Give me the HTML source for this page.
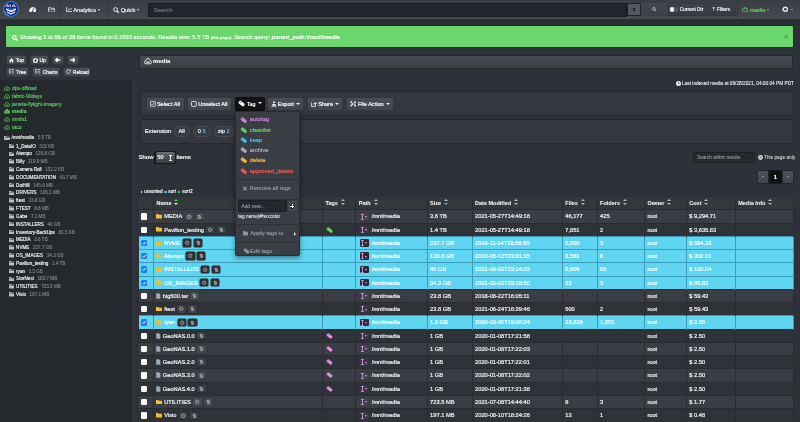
<!DOCTYPE html>
<html><head><meta charset="utf-8">
<style>
*{box-sizing:border-box;margin:0;padding:0}
html,body{width:800px;height:422px;overflow:hidden;background:#2e313a;font-family:"Liberation Sans",sans-serif;color:#fff}
#root{position:absolute;left:0;top:0;width:800px;height:422px;will-change:transform;-webkit-text-stroke-width:0.22px}
.abs{position:absolute}
svg{display:block}
#nav{left:0;top:0;width:800px;height:19px;background:linear-gradient(#3a3d42,#45484d);border-bottom:0.8px solid #4a4d52}
.sep{position:absolute;top:0;width:0.6px;height:18.5px;background:#37393e}
.nt{position:absolute;font-size:5.7px;color:#e8e8e8;white-space:nowrap;line-height:8px;top:6px}
.caret{display:inline-block;width:0;height:0;border-left:1.8px solid transparent;border-right:1.8px solid transparent;border-top:2.1px solid currentColor;vertical-align:middle;margin-left:2px;position:relative;top:-0.5px}
#search{left:147.5px;top:2.5px;width:479.5px;height:14px;background:#222529;border:0.6px solid #1b1d20}
#search span{position:absolute;left:5px;top:3.6px;font-size:6px;color:#6e7176}
.nbtn{position:absolute;top:2.5px;height:13px;background:linear-gradient(#45484e,#3f4248);border-radius:1px}
#alert{left:5.2px;top:25px;width:788.6px;height:23px;background:#6bd66b;border:0.8px solid #2a2632;border-radius:2px}
#alert .t{position:absolute;left:13.5px;top:7.6px;font-size:5.75px;-webkit-text-stroke-width:0.12px;white-space:nowrap;line-height:7px;color:#fff}
.btn{position:absolute;background:linear-gradient(#4a4d53,#42454b);border:0.5px solid #34373c;border-radius:2px;font-size:5.6px;color:#f4f4f4;white-space:nowrap;line-height:8px}
.btn .in{position:absolute;left:0;right:0;top:50%;transform:translateY(-50%);display:flex;align-items:center;justify-content:center;gap:1px}
#tree{left:0;top:80px;width:132px;height:342px;background:#25282c}
.disk{position:absolute;left:3.5px;font-size:5.0px;color:#5fd35f;-webkit-text-stroke-width:0.12px;white-space:nowrap;line-height:7px;display:flex;align-items:center;gap:2.5px}
.ti{position:absolute;-webkit-text-stroke-width:0.15px;font-size:4.6px;color:#f2f2f2;white-space:nowrap;line-height:7px;display:flex;align-items:center}
.ti b{font-weight:normal;margin-left:1.8px}
.ti i{font-style:normal;color:#7f8287;margin-left:3.6px}
.panel{position:absolute;background:#34373e;border:0.8px solid #26292e;border-radius:2px}
table{position:absolute;left:139px;top:197px;border-collapse:collapse;table-layout:fixed;width:654.5px}
td,th{height:13.25px;padding:0 0 0 2.5px;font-size:5.7px;white-space:nowrap;overflow:hidden;text-align:left;border-right:0.8px solid #2a2c30;border-top:1px solid #292b2f;color:#ededed;vertical-align:middle}
th{height:12.8px;background:#34373c;font-weight:bold;font-size:5.5px;border-top:none;color:#f4f4f4;-webkit-text-stroke-width:0.05px}
tr.o td{background:#3a3d43}
tr.e td{background:#2f3237}
tr.s td{background:#5fd5f2;border-color:#3a9cb8;color:#f6fcfe}
.cell{display:flex;align-items:center;height:100%}
.cb{width:6.2px;height:6.2px;background:#fdfdfd;border-radius:1.2px;margin-left:-0.5px}
.cb.on{background:#1f7ef2;position:relative}
.sb{display:block;flex:none;width:8.4px;height:7.6px;background:rgba(255,255,255,.07);box-shadow:0 0 0 0.5px rgba(0,0,0,.18);border-radius:1px;margin-left:2.4px;position:relative}
tr.s .sb{background:#332f31;box-shadow:0 0 0 0.5px #222}
.sbx::after{content:"";position:absolute;left:2.5px;top:2.2px;width:3.6px;height:3.6px;border:0.8px solid #9c9fa4;border-radius:50%;box-sizing:border-box}
.sbx.t::after{border-radius:0.5px;border:none;background:linear-gradient(120deg,transparent 38%,#9c9fa4 38%,#9c9fa4 62%,transparent 62%);width:3.6px;height:4.2px;left:2.4px;top:1.8px}
.fic{margin-right:2.2px;flex:none}
.pb{width:9.5px;height:7.4px;background:rgba(120,100,130,.12);border-radius:1.2px;margin-left:1px;margin-right:2.5px;position:relative;flex:none}
tr.s .pb{background:#2d2a31}
.pb::before{content:"";position:absolute;left:1.2px;top:1px;width:2.8px;height:5.6px;background:linear-gradient(#d3a0e6,#d3a0e6) 0 0/2.8px 0.8px no-repeat,linear-gradient(#d3a0e6,#d3a0e6) 0 4.8px/2.8px 0.8px no-repeat,linear-gradient(#c98ae0,#c98ae0) 0.7px 0/1.4px 5.6px no-repeat}
.pb::after{content:"";position:absolute;left:4.9px;top:3.1px;border-left:1.8px solid transparent;border-right:1.8px solid transparent;border-top:2.1px solid #ec8cf0}
.srt{display:inline-block;width:4.2px;height:7px;margin-left:2.8px;vertical-align:middle;position:relative;top:-0.4px}
.srt::before{content:"";position:absolute;left:0;top:0;border-left:2.1px solid transparent;border-right:2.1px solid transparent;border-bottom:2.7px solid #b5b8bc}
.srt::after{content:"";position:absolute;left:0;top:3.9px;border-left:2.1px solid transparent;border-right:2.1px solid transparent;border-top:2.7px solid #b5b8bc}
.srt.g::before{border-bottom-color:#2fe02f}.srt.g::after{border-top-color:#e6dfe6}
.srt.c::after{border-top-color:#45b8e6}
#dd{left:235.2px;top:111px;width:64.5px;height:145.4px;background:#3a3d43;border:0.6px solid #2a2c30;border-radius:0 0 2px 2px;box-shadow:0 2px 5px rgba(0,0,0,.45)}
.di{position:absolute;left:4.2px;font-size:5.8px;white-space:nowrap;line-height:7px;display:flex;align-items:center;gap:1.8px}
.dv{position:absolute;left:0;width:100%;height:0.6px;background:#2e3035}
</style></head><body><div id="root">

<div class="abs" style="left:0;top:18.5px;width:800px;height:7.5px;background:#2b2e34"></div>
<div id="nav" class="abs"></div>
<div class="sep" style="left:59.5px"></div>
<div class="sep" style="left:106.7px"></div>
<div class="sep" style="left:736.8px"></div>
<svg class="abs" style="left:2.8px;top:0.6px" width="16" height="16" viewBox="0 0 32 32">
<circle cx="16" cy="16" r="15.6" fill="#2a9ee2"/><circle cx="16" cy="16" r="13.8" fill="#1e2287"/>
<path d="M5.5 12 L9 6.5 L12.5 12 M7 10 H11 M14.6 6.5 V12 M18 12 L21.5 6.5 L25 12 M19.5 10 H23.5" stroke="#f0f0ff" stroke-width="1.6" fill="none"/>
<path d="M6 14.5 L16 19 L26 14.5 L26 18 L16 22.5 L6 18 Z" fill="#e6f6ff"/>
<path d="M7.5 20.5 L16 24.5 L24.5 20.5 L24 23.5 L16 27.5 L8 23.5 Z" fill="#cdefff"/>
<path d="M9 14 L16 17 L23 14" stroke="#35bdf0" stroke-width="1.2" fill="none"/>
<path d="M3 20 A13.6 13.6 0 0 0 12 29.5" stroke="#3cc3f2" stroke-width="1.6" fill="none"/>
</svg>
<svg class="abs" style="left:28.9px;top:5.7px" width="7.6" height="6.8" viewBox="0 0 15 13.5"><path d="M1.6 12.8 A7 7 0 1 1 13.4 12.8 Z" fill="#efefef"/><path d="M6.8 11 L9.6 4.2" stroke="#3d4045" stroke-width="1.5"/><circle cx="6.8" cy="11" r="1.4" fill="#3d4045"/></svg>
<svg class="abs" style="left:47.6px;top:6.6px" width="7" height="5.6" viewBox="0 0 14 11"><path d="M1 2 Q1 1 2 1 H5 L6.5 2.5 H12 Q13 2.5 13 3.5 V9 Q13 10 12 10 H2 Q1 10 1 9 Z" fill="none" stroke="#e6e6e6" stroke-width="1.6"/><path d="M1.5 4.5 H12.5" stroke="#e6e6e6" stroke-width="1.4"/></svg>
<svg class="abs" style="left:65.6px;top:7.2px" width="6.6" height="5" viewBox="0 0 13 10"><path d="M1 0 V9 H13" stroke="#e8e8e8" stroke-width="1.6" fill="none"/><path d="M3 7 L6 3.5 L8.5 5.5 L12 1.5" stroke="#e8e8e8" stroke-width="1.5" fill="none"/></svg>
<div class="nt" style="left:73.3px">Analytics<span class="caret"></span></div>
<svg class="abs" style="left:113.4px;top:6.9px" width="6.4" height="6.4" viewBox="0 0 13 13"><circle cx="5.3" cy="5.3" r="3.9" stroke="#eee" stroke-width="2" fill="none"/><path d="M8.2 8.2 L12 12" stroke="#eee" stroke-width="2.4"/></svg>
<div class="nt" style="left:120.7px">Quick<span class="caret"></span></div>
<div id="search" class="abs"><span>Search</span></div>
<div class="nbtn" style="left:626.5px;width:14px;background:#54575c;border:0.8px solid #1f2124"><div style="position:absolute;left:5.2px;top:4.8px;width:2.8px;height:2.6px;background:#1c1e21"></div></div>
<div class="nbtn" style="left:641px;width:26px;background:linear-gradient(#44474d,#3d4046)"></div>
<svg class="abs" style="left:651.5px;top:6.8px" width="4.6" height="4.6" viewBox="0 0 13 13"><circle cx="5.3" cy="5.3" r="3.9" stroke="#cfcfcf" stroke-width="2" fill="none"/><path d="M8.2 8.2 L12 12" stroke="#cfcfcf" stroke-width="2.4"/></svg>
<div class="nbtn" style="left:667.5px;width:38px;background:linear-gradient(#3f4248,#383b41);box-shadow:inset 0 0 0 0.5px #2f3237"></div><div class="abs" style="left:669.3px;top:6.6px;width:9px;height:5.8px;border-radius:3px;background:#55585d"></div>
<div class="abs" style="left:669.6px;top:7.1px;width:4.9px;height:4.9px;border-radius:50%;background:#f6f6f6"></div>
<div class="nt" style="left:679.8px;top:5.7px;font-size:4.8px">Current Dir</div>
<div class="nbtn" style="left:707px;width:28.5px;background:linear-gradient(#3f4248,#383b41);box-shadow:inset 0 0 0 0.5px #2f3237"></div>
<div class="nt" style="left:716.8px;top:5.7px;font-size:4.9px">Filters</div><svg class="abs" style="left:712.3px;top:7.3px" width="3.6" height="4" viewBox="0 0 8 9"><path d="M0.5 0.8 H7.5 L4.8 4 V8.5 L3.2 7.5 V4 Z" fill="#ddd"/></svg>
<svg class="abs" style="left:742.3px;top:6.8px" width="6.2" height="5" viewBox="0 0 12 10"><rect x="0.8" y="3.2" width="10.4" height="6" rx="1.2" fill="none" stroke="#5fcf5f" stroke-width="1.4"/><path d="M2 3.5 L3.8 0.8 H8.2 L10 3.5" fill="none" stroke="#5fcf5f" stroke-width="1.3"/><path d="M7.5 6.2 H9.5" stroke="#5fcf5f" stroke-width="1.2"/></svg>
<div class="nt" style="left:749.8px;color:#5fcf5f;font-size:5.8px">media<span class="caret" style="margin-left:1px"></span></div>
<svg class="abs" style="left:781.6px;top:5.6px" width="6.6" height="6.6" viewBox="0 0 14 14"><circle cx="7" cy="7" r="4.3" stroke="#f0f0f0" stroke-width="2.6" fill="none"/><path d="M7 0.8 V2.8 M7 11.2 V13.2 M0.8 7 H2.8 M11.2 7 H13.2 M2.6 2.6 L4 4 M10 10 L11.4 11.4 M2.6 11.4 L4 10 M10 4 L11.4 2.6" stroke="#f0f0f0" stroke-width="1.8"/></svg>
<div class="abs" style="left:790.6px;top:8.9px;width:0;height:0;border-left:1.3px solid transparent;border-right:1.3px solid transparent;border-top:1.8px solid #e8e8e8"></div>
<div id="alert" class="abs">
<svg class="abs" style="left:6.3px;top:8.5px" width="6" height="6" viewBox="0 0 13 13"><circle cx="5.2" cy="5.2" r="3.8" stroke="#fff" stroke-width="2.3" fill="none"/><path d="M8 8 L12 12" stroke="#fff" stroke-width="2.8"/></svg>
<div class="t">Showing <b>1</b> to <b>50</b> of <b>29</b> items found in 0.1593 seconds. Results size: 5.5 TB <span style="font-size:4.3px">(this page)</span>. Search query: <i style="font-weight:bold">parent_path:\/mnt\/media</i></div>
<div class="abs" style="left:778px;top:6.8px;font-size:7px;color:#3f9a3f;line-height:8px">&times;</div>
</div>
<div class="btn" style="left:6px;top:55px;width:21.2px;height:10.2px;font-size:5px"><div class="in"><svg width="5" height="5" viewBox="0 0 10 10"><path d="M5 0.5 L10 5 H8.5 V9.5 H6 V6.5 H4 V9.5 H1.5 V5 H0 Z" fill="#eee"/></svg><span style="margin-left:0.6px">Top</span></div></div>
<div class="btn" style="left:29.7px;top:55px;width:19.3px;height:10.2px;font-size:5px"><div class="in"><svg width="5" height="5" viewBox="0 0 10 10"><circle cx="5" cy="5" r="5" fill="#eee"/><path d="M5 2 L8 5.5 H6 V8 H4 V5.5 H2 Z" fill="#3b3e43"/></svg><span style="margin-left:0.6px">Up</span></div></div>
<div class="btn" style="left:52px;top:55px;width:12px;height:10.2px;font-size:5px"><div class="in"><svg width="5.6" height="5" viewBox="0 0 10 9"><path d="M9.5 4.5 H1.5 M4.8 1 L1.2 4.5 L4.8 8" stroke="#fafafa" stroke-width="2.3" fill="none"/></svg></div></div>
<div class="btn" style="left:66.5px;top:55px;width:12.3px;height:10.2px;font-size:5px"><div class="in"><svg width="5.6" height="5" viewBox="0 0 10 9"><path d="M0.5 4.5 H8.5 M5.2 1 L8.8 4.5 L5.2 8" stroke="#fafafa" stroke-width="2.3" fill="none"/></svg></div></div>
<div class="btn" style="left:6px;top:66.6px;width:23px;height:10.5px;font-size:5px"><div class="in"><svg width="5.5" height="5" viewBox="0 0 11 10"><path d="M1 1 H5 M1 1 V8 H5 M3 4.5 H5 M6 1 H10 M6 4.5 H10 M6 8 H10" stroke="#eee" stroke-width="1.3" fill="none"/></svg><span style="margin-left:1.2px">Tree</span></div></div>
<div class="btn" style="left:32px;top:66.6px;width:28.4px;height:10.5px;font-size:5px"><div class="in"><svg width="5.5" height="5" viewBox="0 0 11 10"><path d="M1 1 H5 M1 1 V8 H5 M3 4.5 H5 M6 1 H10 M6 4.5 H10 M6 8 H10" stroke="#eee" stroke-width="1.3" fill="none"/></svg><span style="margin-left:1.2px">Charts</span></div></div>
<div class="btn" style="left:63px;top:66.6px;width:28.4px;height:10.5px;font-size:5px"><div class="in"><svg width="5" height="5" viewBox="0 0 10 10"><path d="M8.3 3.5 A3.8 3.8 0 1 0 8.5 6.5" stroke="#eee" stroke-width="1.6" fill="none"/><path d="M9.5 0.8 V4.5 H5.8 Z" fill="#eee"/></svg><span style="margin-left:1.2px">Reload</span></div></div>
<div id="tree" class="abs"></div>
<div class="disk" style="top:85.0px"><svg width="6" height="4.8" viewBox="0 0 13 10"><path d="M3 9 Q0.5 9 0.5 6.8 Q0.5 4.8 2.7 4.6 Q3 1 6.5 1 Q9.8 1 10.2 4.3 Q12.5 4.6 12.5 6.8 Q12.5 9 10 9 Z" fill="none" stroke="#5fd35f" stroke-width="1.5"/><path d="M5 4.5 V8 M8 4.5 V8" stroke="#5fd35f" stroke-width="1.1"/></svg><span>dps-offload</span></div>
<div class="disk" style="top:93.0px"><svg width="6" height="4.8" viewBox="0 0 13 10"><path d="M3 9 Q0.5 9 0.5 6.8 Q0.5 4.8 2.7 4.6 Q3 1 6.5 1 Q9.8 1 10.2 4.3 Q12.5 4.6 12.5 6.8 Q12.5 9 10 9 Z" fill="none" stroke="#5fd35f" stroke-width="1.5"/><path d="M5 4.5 V8 M8 4.5 V8" stroke="#5fd35f" stroke-width="1.1"/></svg><span>fabric-90days</span></div>
<div class="disk" style="top:100.8px"><svg width="6" height="4.8" viewBox="0 0 13 10"><path d="M3 9 Q0.5 9 0.5 6.8 Q0.5 4.8 2.7 4.6 Q3 1 6.5 1 Q9.8 1 10.2 4.3 Q12.5 4.6 12.5 6.8 Q12.5 9 10 9 Z" fill="none" stroke="#5fd35f" stroke-width="1.5"/><path d="M5 4.5 V8 M8 4.5 V8" stroke="#5fd35f" stroke-width="1.1"/></svg><span>janelia-flylight-imagery</span></div>
<div class="disk" style="top:108.3px;font-weight:bold"><svg width="6" height="4.8" viewBox="0 0 13 10"><path d="M3 9 Q0.5 9 0.5 6.8 Q0.5 4.8 2.7 4.6 Q3 1 6.5 1 Q9.8 1 10.2 4.3 Q12.5 4.6 12.5 6.8 Q12.5 9 10 9 Z" fill="#5fd35f" stroke="#5fd35f" stroke-width="1.5"/><path d="M5 4.5 V8 M8 4.5 V8" stroke="#25282c" stroke-width="1.1"/></svg><span>media</span></div>
<div class="disk" style="top:116.3px"><svg width="6" height="4.8" viewBox="0 0 13 10"><path d="M3 9 Q0.5 9 0.5 6.8 Q0.5 4.8 2.7 4.6 Q3 1 6.5 1 Q9.8 1 10.2 4.3 Q12.5 4.6 12.5 6.8 Q12.5 9 10 9 Z" fill="none" stroke="#5fd35f" stroke-width="1.5"/><path d="M5 4.5 V8 M8 4.5 V8" stroke="#5fd35f" stroke-width="1.1"/></svg><span>mmfs1</span></div>
<div class="disk" style="top:123.9px"><svg width="6" height="4.8" viewBox="0 0 13 10"><path d="M3 9 Q0.5 9 0.5 6.8 Q0.5 4.8 2.7 4.6 Q3 1 6.5 1 Q9.8 1 10.2 4.3 Q12.5 4.6 12.5 6.8 Q12.5 9 10 9 Z" fill="none" stroke="#5fd35f" stroke-width="1.5"/><path d="M5 4.5 V8 M8 4.5 V8" stroke="#5fd35f" stroke-width="1.1"/></svg><span>taco</span></div>
<div class="ti" style="left:3.8px;top:134.3px"><svg width="5.8" height="4.6" viewBox="0 0 12 9.5"><path d="M0 1 Q0 0 1 0 H4.5 L5.5 1.3 H11 Q12 1.3 12 2.3 V8.5 Q12 9.5 11 9.5 H1 Q0 9.5 0 8.5 Z" fill="#b9bcc1"/><path d="M0.5 3 H11.5" stroke="#25282c" stroke-width="0.9"/></svg><b>/mnt/media</b><i>5.5 TB</i></div>
<div class="ti" style="left:8.5px;top:142.50px"><svg width="5.8" height="4.6" viewBox="0 0 12 9.5"><path d="M0 1 Q0 0 1 0 H4.5 L5.5 1.3 H11 Q12 1.3 12 2.3 V8.5 Q12 9.5 11 9.5 H1 Q0 9.5 0 8.5 Z" fill="#b9bcc1"/><path d="M0.5 3 H11.5" stroke="#25282c" stroke-width="0.9"/></svg><b>1_DataIO</b><i>332 KB</i></div>
<div class="ti" style="left:8.5px;top:150.32px"><svg width="5.8" height="4.6" viewBox="0 0 12 9.5"><path d="M0 1 Q0 0 1 0 H4.5 L5.5 1.3 H11 Q12 1.3 12 2.3 V8.5 Q12 9.5 11 9.5 H1 Q0 9.5 0 8.5 Z" fill="#b9bcc1"/><path d="M0.5 3 H11.5" stroke="#25282c" stroke-width="0.9"/></svg><b>Atempo</b><i>120.8 GB</i></div>
<div class="ti" style="left:8.5px;top:158.14px"><svg width="5.8" height="4.6" viewBox="0 0 12 9.5"><path d="M0 1 Q0 0 1 0 H4.5 L5.5 1.3 H11 Q12 1.3 12 2.3 V8.5 Q12 9.5 11 9.5 H1 Q0 9.5 0 8.5 Z" fill="#b9bcc1"/><path d="M0.5 3 H11.5" stroke="#25282c" stroke-width="0.9"/></svg><b>Billy</b><i>119.9 MB</i></div>
<div class="ti" style="left:8.5px;top:165.96px"><svg width="5.8" height="4.6" viewBox="0 0 12 9.5"><path d="M0 1 Q0 0 1 0 H4.5 L5.5 1.3 H11 Q12 1.3 12 2.3 V8.5 Q12 9.5 11 9.5 H1 Q0 9.5 0 8.5 Z" fill="#b9bcc1"/><path d="M0.5 3 H11.5" stroke="#25282c" stroke-width="0.9"/></svg><b>Camera Roll</b><i>152.2 KB</i></div>
<div class="ti" style="left:8.5px;top:173.78px"><svg width="5.8" height="4.6" viewBox="0 0 12 9.5"><path d="M0 1 Q0 0 1 0 H4.5 L5.5 1.3 H11 Q12 1.3 12 2.3 V8.5 Q12 9.5 11 9.5 H1 Q0 9.5 0 8.5 Z" fill="#b9bcc1"/><path d="M0.5 3 H11.5" stroke="#25282c" stroke-width="0.9"/></svg><b>DOCUMENTATION</b><i>43.7 MB</i></div>
<div class="ti" style="left:8.5px;top:181.60px"><svg width="5.8" height="4.6" viewBox="0 0 12 9.5"><path d="M0 1 Q0 0 1 0 H4.5 L5.5 1.3 H11 Q12 1.3 12 2.3 V8.5 Q12 9.5 11 9.5 H1 Q0 9.5 0 8.5 Z" fill="#b9bcc1"/><path d="M0.5 3 H11.5" stroke="#25282c" stroke-width="0.9"/></svg><b>DotHill</b><i>145.6 MB</i></div>
<div class="ti" style="left:8.5px;top:189.42px"><svg width="5.8" height="4.6" viewBox="0 0 12 9.5"><path d="M0 1 Q0 0 1 0 H4.5 L5.5 1.3 H11 Q12 1.3 12 2.3 V8.5 Q12 9.5 11 9.5 H1 Q0 9.5 0 8.5 Z" fill="#b9bcc1"/><path d="M0.5 3 H11.5" stroke="#25282c" stroke-width="0.9"/></svg><b>DRIVERS</b><i>106.1 MB</i></div>
<div class="ti" style="left:8.5px;top:197.24px"><svg width="5.8" height="4.6" viewBox="0 0 12 9.5"><path d="M0 1 Q0 0 1 0 H4.5 L5.5 1.3 H11 Q12 1.3 12 2.3 V8.5 Q12 9.5 11 9.5 H1 Q0 9.5 0 8.5 Z" fill="#b9bcc1"/><path d="M0.5 3 H11.5" stroke="#25282c" stroke-width="0.9"/></svg><b>ftest</b><i>23.8 GB</i></div>
<div class="ti" style="left:8.5px;top:205.06px"><svg width="5.8" height="4.6" viewBox="0 0 12 9.5"><path d="M0 1 Q0 0 1 0 H4.5 L5.5 1.3 H11 Q12 1.3 12 2.3 V8.5 Q12 9.5 11 9.5 H1 Q0 9.5 0 8.5 Z" fill="#b9bcc1"/><path d="M0.5 3 H11.5" stroke="#25282c" stroke-width="0.9"/></svg><b>FTEST</b><i>8.8 MB</i></div>
<div class="ti" style="left:8.5px;top:212.88px"><svg width="5.8" height="4.6" viewBox="0 0 12 9.5"><path d="M0 1 Q0 0 1 0 H4.5 L5.5 1.3 H11 Q12 1.3 12 2.3 V8.5 Q12 9.5 11 9.5 H1 Q0 9.5 0 8.5 Z" fill="#b9bcc1"/><path d="M0.5 3 H11.5" stroke="#25282c" stroke-width="0.9"/></svg><b>Gabe</b><i>7.1 MB</i></div>
<div class="ti" style="left:8.5px;top:220.70px"><svg width="5.8" height="4.6" viewBox="0 0 12 9.5"><path d="M0 1 Q0 0 1 0 H4.5 L5.5 1.3 H11 Q12 1.3 12 2.3 V8.5 Q12 9.5 11 9.5 H1 Q0 9.5 0 8.5 Z" fill="#b9bcc1"/><path d="M0.5 3 H11.5" stroke="#25282c" stroke-width="0.9"/></svg><b>INSTALLERS</b><i>40 GB</i></div>
<div class="ti" style="left:8.5px;top:228.52px"><svg width="5.8" height="4.6" viewBox="0 0 12 9.5"><path d="M0 1 Q0 0 1 0 H4.5 L5.5 1.3 H11 Q12 1.3 12 2.3 V8.5 Q12 9.5 11 9.5 H1 Q0 9.5 0 8.5 Z" fill="#b9bcc1"/><path d="M0.5 3 H11.5" stroke="#25282c" stroke-width="0.9"/></svg><b>Inventory-BackUps</b><i>81.5 KB</i></div>
<div class="ti" style="left:8.5px;top:236.34px"><svg width="5.8" height="4.6" viewBox="0 0 12 9.5"><path d="M0 1 Q0 0 1 0 H4.5 L5.5 1.3 H11 Q12 1.3 12 2.3 V8.5 Q12 9.5 11 9.5 H1 Q0 9.5 0 8.5 Z" fill="#b9bcc1"/><path d="M0.5 3 H11.5" stroke="#25282c" stroke-width="0.9"/></svg><b>MEDIA</b><i>3.6 TB</i></div>
<div class="ti" style="left:8.5px;top:244.16px"><svg width="5.8" height="4.6" viewBox="0 0 12 9.5"><path d="M0 1 Q0 0 1 0 H4.5 L5.5 1.3 H11 Q12 1.3 12 2.3 V8.5 Q12 9.5 11 9.5 H1 Q0 9.5 0 8.5 Z" fill="#b9bcc1"/><path d="M0.5 3 H11.5" stroke="#25282c" stroke-width="0.9"/></svg><b>NVME</b><i>237.7 GB</i></div>
<div class="ti" style="left:8.5px;top:251.98px"><svg width="5.8" height="4.6" viewBox="0 0 12 9.5"><path d="M0 1 Q0 0 1 0 H4.5 L5.5 1.3 H11 Q12 1.3 12 2.3 V8.5 Q12 9.5 11 9.5 H1 Q0 9.5 0 8.5 Z" fill="#b9bcc1"/><path d="M0.5 3 H11.5" stroke="#25282c" stroke-width="0.9"/></svg><b>OS_IMAGES</b><i>34.3 GB</i></div>
<div class="ti" style="left:8.5px;top:259.80px"><svg width="5.8" height="4.6" viewBox="0 0 12 9.5"><path d="M0 1 Q0 0 1 0 H4.5 L5.5 1.3 H11 Q12 1.3 12 2.3 V8.5 Q12 9.5 11 9.5 H1 Q0 9.5 0 8.5 Z" fill="#b9bcc1"/><path d="M0.5 3 H11.5" stroke="#25282c" stroke-width="0.9"/></svg><b>Pavilion_testing</b><i>1.4 TB</i></div>
<div class="ti" style="left:8.5px;top:267.62px"><svg width="5.8" height="4.6" viewBox="0 0 12 9.5"><path d="M0 1 Q0 0 1 0 H4.5 L5.5 1.3 H11 Q12 1.3 12 2.3 V8.5 Q12 9.5 11 9.5 H1 Q0 9.5 0 8.5 Z" fill="#b9bcc1"/><path d="M0.5 3 H11.5" stroke="#25282c" stroke-width="0.9"/></svg><b>ryan</b><i>1.5 GB</i></div>
<div class="ti" style="left:8.5px;top:275.44px"><svg width="5.8" height="4.6" viewBox="0 0 12 9.5"><path d="M0 1 Q0 0 1 0 H4.5 L5.5 1.3 H11 Q12 1.3 12 2.3 V8.5 Q12 9.5 11 9.5 H1 Q0 9.5 0 8.5 Z" fill="#b9bcc1"/><path d="M0.5 3 H11.5" stroke="#25282c" stroke-width="0.9"/></svg><b>StorNext</b><i>180.7 MB</i></div>
<div class="ti" style="left:8.5px;top:283.26px"><svg width="5.8" height="4.6" viewBox="0 0 12 9.5"><path d="M0 1 Q0 0 1 0 H4.5 L5.5 1.3 H11 Q12 1.3 12 2.3 V8.5 Q12 9.5 11 9.5 H1 Q0 9.5 0 8.5 Z" fill="#b9bcc1"/><path d="M0.5 3 H11.5" stroke="#25282c" stroke-width="0.9"/></svg><b>UTILITIES</b><i>723.5 MB</i></div>
<div class="ti" style="left:8.5px;top:291.08px"><svg width="5.8" height="4.6" viewBox="0 0 12 9.5"><path d="M0 1 Q0 0 1 0 H4.5 L5.5 1.3 H11 Q12 1.3 12 2.3 V8.5 Q12 9.5 11 9.5 H1 Q0 9.5 0 8.5 Z" fill="#b9bcc1"/><path d="M0.5 3 H11.5" stroke="#25282c" stroke-width="0.9"/></svg><b>Visio</b><i>197.1 MB</i></div>
<div class="panel" style="left:139.2px;top:54.8px;width:653.8px;height:14.4px;background:linear-gradient(#474a50,#3b3e44);border-color:#26282c"></div>
<div class="abs" style="left:144.1px;top:57.9px;display:flex;align-items:center;gap:1.2px;font-size:6px;font-weight:bold;line-height:7px;-webkit-text-stroke-width:0.08px"><svg width="7.8" height="6.4" viewBox="0 0 13 10.5"><path d="M3 9.6 Q0.6 9.6 0.6 7.2 Q0.6 5.1 2.7 4.8 Q3 0.8 6.6 0.8 Q10 0.8 10.4 4.4 Q12.4 4.8 12.4 7.2 Q12.4 9.6 10 9.6 Z" fill="none" stroke="#f0f0f0" stroke-width="1.5"/><rect x="3.6" y="5.6" width="5.8" height="2.4" rx="0.5" fill="#f0f0f0"/></svg><span>media</span></div>
<div class="abs" style="right:6px;top:79.5px;display:flex;align-items:center;gap:1.4px;font-size:4.75px;line-height:7px;white-space:nowrap;-webkit-text-stroke-width:0.06px"><svg width="5" height="5" viewBox="0 0 10 10"><circle cx="5" cy="5" r="5" fill="#eee"/><path d="M5 2.2 V5.3 H7.3" stroke="#30333a" stroke-width="1.2" fill="none"/></svg><span>Last indexed media at 09/28/2021, 04:00:04 PM PDT</span></div>
<div class="panel" style="left:140.2px;top:91px;width:654.3px;height:25.3px"></div>
<div class="panel" style="left:140.2px;top:119px;width:654.3px;height:24.8px"></div>
<div class="btn" style="left:145.5px;top:97px;width:39px;height:14.2px;"><div class="in"><svg width="5.8" height="5.8" viewBox="0 0 10 10"><rect x="0.8" y="0.8" width="8.4" height="8.4" rx="1" stroke="#eee" stroke-width="1.3" fill="none"/><path d="M2.5 5 L4.3 7 L7.7 2.8" stroke="#eee" stroke-width="1.3" fill="none"/></svg><span>Select All</span></div></div>
<div class="btn" style="left:187.2px;top:97px;width:44.5px;height:14.2px;"><div class="in"><svg width="5.8" height="5.8" viewBox="0 0 10 10"><rect x="0.8" y="0.8" width="8.4" height="8.4" rx="1.5" stroke="#eee" stroke-width="1.5" fill="none"/></svg><span>Unselect All</span></div></div>
<div class="btn" style="left:234.7px;top:96.5px;width:30.4px;height:14.6px;background:#121315;border-color:#0c0c0d"><div class="in"><svg width="7.2" height="7" viewBox="0 0 14 14"><g transform="rotate(40 7 7)"><rect x="0.6" y="3.6" width="12.8" height="6.8" rx="2.4" fill="#f4f4f4"/><circle cx="3.4" cy="7" r="1" fill="#121315"/></g></svg><span style="font-size:5.3px;margin-left:0.6px">Tag</span><span class="caret" style="margin-left:1.2px;border-left-width:2px;border-right-width:2px;border-top-width:2.3px"></span></div></div>
<div class="btn" style="left:266.6px;top:97px;width:37.7px;height:14.2px;"><div class="in"><svg width="6" height="6" viewBox="0 0 12 12"><circle cx="6" cy="2.6" r="2" fill="#f2f2f2"/><path d="M3 5.8 H9 L10 9.6 H2 Z" fill="#f2f2f2"/><path d="M0.8 11.2 H11.2" stroke="#f2f2f2" stroke-width="1.3"/></svg><span>Export</span><span class="caret" style="margin-left:1.2px;border-left-width:2px;border-right-width:2px;border-top-width:2.3px"></span></div></div>
<div class="btn" style="left:307.2px;top:97px;width:36px;height:14.2px;"><div class="in"><svg width="6" height="6" viewBox="0 0 12 12"><path d="M1 3 V11 H9 V7.5" stroke="#f2f2f2" stroke-width="1.5" fill="none"/><path d="M3.5 8 Q4 4 8 4 V1.5 L11.5 5 L8 8.5 V6 Q5.5 6 3.5 8 Z" fill="#f2f2f2"/></svg><span>Share</span><span class="caret" style="margin-left:1.2px;border-left-width:2px;border-right-width:2px;border-top-width:2.3px"></span></div></div>
<div class="btn" style="left:346.2px;top:97px;width:48px;height:14.2px;"><div class="in"><svg width="6.4" height="5.8" viewBox="0 0 13 12"><path d="M3 3 L10 9 M10 3 L3 9" stroke="#f2f2f2" stroke-width="1.6"/><circle cx="2.6" cy="2.6" r="2" fill="#f2f2f2"/><circle cx="10.4" cy="2.6" r="2" fill="#f2f2f2"/><circle cx="2.6" cy="9.4" r="2" fill="#f2f2f2"/><circle cx="10.4" cy="9.4" r="2" fill="#f2f2f2"/></svg><span>File Action</span><span class="caret" style="margin-left:1.2px;border-left-width:2px;border-right-width:2px;border-top-width:2.3px"></span></div></div>
<div class="abs" style="left:144.7px;top:128px;font-size:6.05px;line-height:7px;color:#f0f0f0">Extension</div>
<div class="abs" style="left:173.7px;top:126.2px;width:16px;height:10.5px;border-radius:5.2px;background:#383b41;border:0.6px solid #4a4d53;display:flex;align-items:center;justify-content:center;font-size:5.6px;line-height:7px;color:#eee;gap:1.6px">All</div>
<div class="abs" style="left:192.7px;top:126.2px;width:18px;height:10.5px;border-radius:5.2px;background:#383b41;border:0.6px solid #4a4d53;display:flex;align-items:center;justify-content:center;font-size:5.6px;line-height:7px;color:#eee;gap:1.6px"><span>0</span><span style="color:#4cb8e0">5</span></div>
<div class="abs" style="left:213.7px;top:126.2px;width:20px;height:10.5px;border-radius:5.2px;background:#383b41;border:0.6px solid #4a4d53;display:flex;align-items:center;justify-content:center;font-size:5.6px;line-height:7px;color:#eee;gap:1.6px"><span>zip</span><span style="color:#4cb8e0">2</span></div>
<div class="abs" style="left:138.5px;top:154px;font-size:6px;line-height:7px;color:#f0f0f0">Show</div>
<div class="abs" style="left:154.4px;top:151.3px;width:21.2px;height:12.7px;border-radius:2.6px;background:#15171a"></div>
<div class="abs" style="left:155.5px;top:152.4px;width:19px;height:10.5px;border-radius:1.8px;background:linear-gradient(#6c6f74,#4a4d52 45%,#3c3f44)"></div>
<div class="abs" style="left:157.6px;top:154.3px;font-size:5.4px;line-height:7px;color:#f2f2f2">50</div>
<div class="abs" style="left:170.1px;top:154.8px;width:1.1px;height:5.6px;background:#f2f2f2"></div><div class="abs" style="left:169.2px;top:154.8px;width:2.9px;height:0.9px;background:#f2f2f2"></div><div class="abs" style="left:169.2px;top:159.5px;width:2.9px;height:0.9px;background:#f2f2f2"></div>
<div class="abs" style="left:176.5px;top:154px;font-size:6px;line-height:7px;color:#f0f0f0">items</div>
<div class="abs" style="left:692.6px;top:152.4px;width:62.4px;height:11px;background:#25282c;border:0.6px solid #1e2023;border-radius:1px"></div>
<div class="abs" style="left:697px;top:155.1px;font-size:4.7px;line-height:6px;color:#a3a6ab;-webkit-text-stroke-width:0.05px">Search within results</div>
<div class="abs" style="left:757.6px;top:154.6px;display:flex;align-items:center;gap:1.4px;font-size:4.8px;line-height:6px;color:#ddd;white-space:nowrap;-webkit-text-stroke-width:0.06px"><svg width="5" height="5" viewBox="0 0 10 10"><circle cx="5" cy="5" r="4.8" fill="#ddd"/><path d="M3.2 3.2 L6.8 6.8 M6.8 3.2 L3.2 6.8" stroke="#34373e" stroke-width="1.3"/></svg><span>This page only</span></div>
<div class="abs" style="left:757px;top:169.8px;width:12px;height:14.4px;background:linear-gradient(#505359,#44474d);border:0.6px solid #222428;border-radius:1.5px 0 0 1.5px"></div><div class="abs" style="left:762px;top:176.2px;width:1.6px;height:1.2px;background:#8a8d92"></div>
<div class="abs" style="left:768.9px;top:169.8px;width:12.8px;height:14.4px;background:#0f1012;border:0.6px solid #1a1b1e;font-size:5.8px;font-weight:bold;color:#fff;text-align:center;line-height:13.4px">1</div>
<div class="abs" style="left:781.6px;top:169.8px;width:12.4px;height:14.4px;background:linear-gradient(#505359,#44474d);border:0.6px solid #222428;border-radius:0 1.5px 1.5px 0"></div><div class="abs" style="left:787px;top:176.2px;width:1.6px;height:1.2px;background:#8a8d92"></div>
<div class="abs" style="left:140.6px;top:189px;display:flex;align-items:center;font-size:4.7px;line-height:6px;color:#e8e8e8;white-space:nowrap"><span style="width:1.4px;height:1.4px;background:#ddd;margin-right:2.3px"></span><span>unsorted</span><span style="width:2.2px;height:2.2px;background:#45b8e6;margin:0 1.8px"></span><span>sort</span><span style="width:2.4px;height:2.4px;background:#3ed23e;margin:0 1.8px"></span><span>sort2</span></div>
<table>
<colgroup><col style="width:14.5px"><col style="width:169px"><col style="width:33.3px"><col style="width:71.3px"><col style="width:45px"><col style="width:90.2px"><col style="width:34.8px"><col style="width:47.3px"><col style="width:41.9px"><col style="width:48.9px"><col style="width:58.3px"></colgroup>
<tr><th></th><th>Name<span class="srt g"></span></th><th>Tags<span class="srt "></span></th><th>Path<span class="srt "></span></th><th>Size<span class="srt c"></span></th><th>Date Modified<span class="srt "></span></th><th>Files<span class="srt "></span></th><th>Folders<span class="srt "></span></th><th>Owner<span class="srt "></span></th><th>Cost<span class="srt "></span></th><th>Media Info<span class="srt "></span></th></tr>
<tr class="o"><td><div class="cell"><div class="cb"></div></div></td><td style="padding-left:2px"><div class="cell"><svg class="fic" width="6" height="4.5" viewBox="0 0 12 9"><path d="M0 1 Q0 0 1 0 H4.5 L5.5 1.3 H11 Q12 1.3 12 2.3 V8 Q12 9 11 9 H1 Q0 9 0 8 Z" fill="#f5bd2a"/></svg><span>MEDIA</span><span class="sb"><svg width="8.4" height="7.6" viewBox="0 0 84 76"><circle cx="42" cy="38" r="17" stroke="#a3a6aa" stroke-width="9" fill="none"/><circle cx="42" cy="38" r="5" fill="#a3a6aa"/></svg></span><span class="sb"><svg width="8.4" height="7.6" viewBox="0 0 84 76"><path d="M30 18 H50 L58 26 V58 H30 Z" fill="#a3a6aa" transform="rotate(-18 44 38)"/><path d="M36 34 H50 M36 42 H50" stroke="#34373e" stroke-width="4" transform="rotate(-18 44 38)"/></svg></span></div></td><td><div class="cell"></div></td><td><div class="cell"><span class="pb"></span><span>/mnt/media</span></div></td><td>3.6 TB</td><td>2021-05-27T14:49:18</td><td>46,177</td><td>425</td><td>root</td><td>$ 9,294.71</td><td></td></tr>
<tr class="e"><td><div class="cell"><div class="cb"></div></div></td><td style="padding-left:2px"><div class="cell"><svg class="fic" width="6" height="4.5" viewBox="0 0 12 9"><path d="M0 1 Q0 0 1 0 H4.5 L5.5 1.3 H11 Q12 1.3 12 2.3 V8 Q12 9 11 9 H1 Q0 9 0 8 Z" fill="#f5bd2a"/></svg><span>Pavilion_testing</span><span class="sb"><svg width="8.4" height="7.6" viewBox="0 0 84 76"><circle cx="42" cy="38" r="17" stroke="#a3a6aa" stroke-width="9" fill="none"/><circle cx="42" cy="38" r="5" fill="#a3a6aa"/></svg></span><span class="sb"><svg width="8.4" height="7.6" viewBox="0 0 84 76"><path d="M30 18 H50 L58 26 V58 H30 Z" fill="#a3a6aa" transform="rotate(-18 44 38)"/><path d="M36 34 H50 M36 42 H50" stroke="#34373e" stroke-width="4" transform="rotate(-18 44 38)"/></svg></span></div></td><td><div class="cell"><div style="margin-left:0.8px"><svg width="7.2" height="6.2" viewBox="0 0 14 12"><g transform="rotate(38 7 6)"><rect x="0.8" y="3" width="12.4" height="6" rx="2.2" fill="#62d94f"/><circle cx="3.3" cy="6" r="0.9" fill="rgba(0,0,0,.35)"/></g></svg></div></div></td><td><div class="cell"><span class="pb"></span><span>/mnt/media</span></div></td><td>1.4 TB</td><td>2021-05-27T14:49:18</td><td>7,851</td><td>2</td><td>root</td><td>$ 3,638.83</td><td></td></tr>
<tr class="s"><td><div class="cell"><div class="cb on"><svg width="6.2" height="6.2" viewBox="0 0 12 12"><path d="M3 6.2 L5.2 8.4 L9.2 3.8" stroke="#fff" stroke-width="1.6" fill="none"/></svg></div></div></td><td style="padding-left:2px"><div class="cell"><svg class="fic" width="6" height="4.5" viewBox="0 0 12 9"><path d="M0 1 Q0 0 1 0 H4.5 L5.5 1.3 H11 Q12 1.3 12 2.3 V8 Q12 9 11 9 H1 Q0 9 0 8 Z" fill="#f5bd2a"/></svg><span>NVME</span><span class="sb"><svg width="8.4" height="7.6" viewBox="0 0 84 76"><circle cx="42" cy="38" r="17" stroke="#a3a6aa" stroke-width="9" fill="none"/><circle cx="42" cy="38" r="5" fill="#a3a6aa"/></svg></span><span class="sb"><svg width="8.4" height="7.6" viewBox="0 0 84 76"><path d="M30 18 H50 L58 26 V58 H30 Z" fill="#a3a6aa" transform="rotate(-18 44 38)"/><path d="M36 34 H50 M36 42 H50" stroke="#34373e" stroke-width="4" transform="rotate(-18 44 38)"/></svg></span></div></td><td><div class="cell"></div></td><td><div class="cell"><span class="pb"></span><span>/mnt/media</span></div></td><td>237.7 GB</td><td>2019-11-14T16:56:50</td><td>5,000</td><td>3</td><td>root</td><td>$ 594.33</td><td></td></tr>
<tr class="s"><td><div class="cell"><div class="cb on"><svg width="6.2" height="6.2" viewBox="0 0 12 12"><path d="M3 6.2 L5.2 8.4 L9.2 3.8" stroke="#fff" stroke-width="1.6" fill="none"/></svg></div></div></td><td style="padding-left:2px"><div class="cell"><svg class="fic" width="6" height="4.5" viewBox="0 0 12 9"><path d="M0 1 Q0 0 1 0 H4.5 L5.5 1.3 H11 Q12 1.3 12 2.3 V8 Q12 9 11 9 H1 Q0 9 0 8 Z" fill="#f5bd2a"/></svg><span>Atempo</span><span class="sb"><svg width="8.4" height="7.6" viewBox="0 0 84 76"><circle cx="42" cy="38" r="17" stroke="#a3a6aa" stroke-width="9" fill="none"/><circle cx="42" cy="38" r="5" fill="#a3a6aa"/></svg></span><span class="sb"><svg width="8.4" height="7.6" viewBox="0 0 84 76"><path d="M30 18 H50 L58 26 V58 H30 Z" fill="#a3a6aa" transform="rotate(-18 44 38)"/><path d="M36 34 H50 M36 42 H50" stroke="#34373e" stroke-width="4" transform="rotate(-18 44 38)"/></svg></span></div></td><td><div class="cell"></div></td><td><div class="cell"><span class="pb"></span><span>/mnt/media</span></div></td><td>120.8 GB</td><td>2019-08-12T23:01:35</td><td>2,561</td><td>8</td><td>root</td><td>$ 302.01</td><td></td></tr>
<tr class="s"><td><div class="cell"><div class="cb on"><svg width="6.2" height="6.2" viewBox="0 0 12 12"><path d="M3 6.2 L5.2 8.4 L9.2 3.8" stroke="#fff" stroke-width="1.6" fill="none"/></svg></div></div></td><td style="padding-left:2px"><div class="cell"><svg class="fic" width="6" height="4.5" viewBox="0 0 12 9"><path d="M0 1 Q0 0 1 0 H4.5 L5.5 1.3 H11 Q12 1.3 12 2.3 V8 Q12 9 11 9 H1 Q0 9 0 8 Z" fill="#f5bd2a"/></svg><span>INSTALLERS</span><span class="sb"><svg width="8.4" height="7.6" viewBox="0 0 84 76"><circle cx="42" cy="38" r="17" stroke="#a3a6aa" stroke-width="9" fill="none"/><circle cx="42" cy="38" r="5" fill="#a3a6aa"/></svg></span><span class="sb"><svg width="8.4" height="7.6" viewBox="0 0 84 76"><path d="M30 18 H50 L58 26 V58 H30 Z" fill="#a3a6aa" transform="rotate(-18 44 38)"/><path d="M36 34 H50 M36 42 H50" stroke="#34373e" stroke-width="4" transform="rotate(-18 44 38)"/></svg></span></div></td><td><div class="cell"></div></td><td><div class="cell"><span class="pb"></span><span>/mnt/media</span></div></td><td>40 GB</td><td>2021-09-02T23:14:22</td><td>5,606</td><td>99</td><td>root</td><td>$ 100.04</td><td></td></tr>
<tr class="s"><td><div class="cell"><div class="cb on"><svg width="6.2" height="6.2" viewBox="0 0 12 12"><path d="M3 6.2 L5.2 8.4 L9.2 3.8" stroke="#fff" stroke-width="1.6" fill="none"/></svg></div></div></td><td style="padding-left:2px"><div class="cell"><svg class="fic" width="6" height="4.5" viewBox="0 0 12 9"><path d="M0 1 Q0 0 1 0 H4.5 L5.5 1.3 H11 Q12 1.3 12 2.3 V8 Q12 9 11 9 H1 Q0 9 0 8 Z" fill="#f5bd2a"/></svg><span>OS_IMAGES</span><span class="sb"><svg width="8.4" height="7.6" viewBox="0 0 84 76"><circle cx="42" cy="38" r="17" stroke="#a3a6aa" stroke-width="9" fill="none"/><circle cx="42" cy="38" r="5" fill="#a3a6aa"/></svg></span><span class="sb"><svg width="8.4" height="7.6" viewBox="0 0 84 76"><path d="M30 18 H50 L58 26 V58 H30 Z" fill="#a3a6aa" transform="rotate(-18 44 38)"/><path d="M36 34 H50 M36 42 H50" stroke="#34373e" stroke-width="4" transform="rotate(-18 44 38)"/></svg></span></div></td><td><div class="cell"></div></td><td><div class="cell"><span class="pb"></span><span>/mnt/media</span></div></td><td>34.3 GB</td><td>2021-09-02T23:15:50</td><td>12</td><td>3</td><td>root</td><td>$ 85.83</td><td></td></tr>
<tr class="o"><td><div class="cell"><div class="cb"></div></div></td><td style="padding-left:2px"><div class="cell"><svg class="fic" width="4.6" height="6" viewBox="0 0 9 12"><path d="M0.3 0.3 H6 L8.7 3 V11.7 H0.3 Z" fill="#8d9aab"/><path d="M1.5 1.5 H5.4 V3.6 H7.5 V10.5 H1.5 Z" fill="#aab6c4"/><path d="M2.6 6 H6.4 M2.6 8 H6.4" stroke="#6f7c8d" stroke-width="0.8"/></svg><span>big500.tar</span><span class="sb"><svg width="8.4" height="7.6" viewBox="0 0 84 76"><path d="M30 18 H50 L58 26 V58 H30 Z" fill="#a3a6aa" transform="rotate(-18 44 38)"/><path d="M36 34 H50 M36 42 H50" stroke="#34373e" stroke-width="4" transform="rotate(-18 44 38)"/></svg></span></div></td><td><div class="cell"></div></td><td><div class="cell"><span class="pb"></span><span>/mnt/media</span></div></td><td>23.8 GB</td><td>2018-08-22T16:05:11</td><td></td><td></td><td>root</td><td>$ 59.43</td><td></td></tr>
<tr class="e"><td><div class="cell"><div class="cb"></div></div></td><td style="padding-left:2px"><div class="cell"><svg class="fic" width="6" height="4.5" viewBox="0 0 12 9"><path d="M0 1 Q0 0 1 0 H4.5 L5.5 1.3 H11 Q12 1.3 12 2.3 V8 Q12 9 11 9 H1 Q0 9 0 8 Z" fill="#f5bd2a"/></svg><span>ftest</span><span class="sb"><svg width="8.4" height="7.6" viewBox="0 0 84 76"><circle cx="42" cy="38" r="17" stroke="#a3a6aa" stroke-width="9" fill="none"/><circle cx="42" cy="38" r="5" fill="#a3a6aa"/></svg></span><span class="sb"><svg width="8.4" height="7.6" viewBox="0 0 84 76"><path d="M30 18 H50 L58 26 V58 H30 Z" fill="#a3a6aa" transform="rotate(-18 44 38)"/><path d="M36 34 H50 M36 42 H50" stroke="#34373e" stroke-width="4" transform="rotate(-18 44 38)"/></svg></span></div></td><td><div class="cell"></div></td><td><div class="cell"><span class="pb"></span><span>/mnt/media</span></div></td><td>23.8 GB</td><td>2021-06-24T16:39:46</td><td>500</td><td>2</td><td>root</td><td>$ 59.43</td><td></td></tr>
<tr class="s"><td><div class="cell"><div class="cb on"><svg width="6.2" height="6.2" viewBox="0 0 12 12"><path d="M3 6.2 L5.2 8.4 L9.2 3.8" stroke="#fff" stroke-width="1.6" fill="none"/></svg></div></div></td><td style="padding-left:2px"><div class="cell"><svg class="fic" width="6" height="4.5" viewBox="0 0 12 9"><path d="M0 1 Q0 0 1 0 H4.5 L5.5 1.3 H11 Q12 1.3 12 2.3 V8 Q12 9 11 9 H1 Q0 9 0 8 Z" fill="#f5bd2a"/></svg><span>ryan</span><span class="sb"><svg width="8.4" height="7.6" viewBox="0 0 84 76"><circle cx="42" cy="38" r="17" stroke="#a3a6aa" stroke-width="9" fill="none"/><circle cx="42" cy="38" r="5" fill="#a3a6aa"/></svg></span><span class="sb"><svg width="8.4" height="7.6" viewBox="0 0 84 76"><path d="M30 18 H50 L58 26 V58 H30 Z" fill="#a3a6aa" transform="rotate(-18 44 38)"/><path d="M36 34 H50 M36 42 H50" stroke="#34373e" stroke-width="4" transform="rotate(-18 44 38)"/></svg></span></div></td><td><div class="cell"></div></td><td><div class="cell"><span class="pb"></span><span>/mnt/media</span></div></td><td>1.5 GB</td><td>2020-03-30T19:06:24</td><td>13,828</td><td>1,352</td><td>root</td><td>$ 3.65</td><td></td></tr>
<tr class="e"><td><div class="cell"><div class="cb"></div></div></td><td style="padding-left:2px"><div class="cell"><svg class="fic" width="4.6" height="6" viewBox="0 0 9 12"><path d="M0.3 0.3 H6 L8.7 3 V11.7 H0.3 Z" fill="#8d9aab"/><path d="M1.5 1.5 H5.4 V3.6 H7.5 V10.5 H1.5 Z" fill="#aab6c4"/><path d="M2.6 6 H6.4 M2.6 8 H6.4" stroke="#6f7c8d" stroke-width="0.8"/></svg><span>GeoNAS.0.0</span><span class="sb"><svg width="8.4" height="7.6" viewBox="0 0 84 76"><path d="M30 18 H50 L58 26 V58 H30 Z" fill="#a3a6aa" transform="rotate(-18 44 38)"/><path d="M36 34 H50 M36 42 H50" stroke="#34373e" stroke-width="4" transform="rotate(-18 44 38)"/></svg></span></div></td><td><div class="cell"><div style="margin-left:0.8px"><svg width="7" height="6" viewBox="0 0 14 12"><g transform="rotate(38 7 6)"><rect x="0.8" y="3" width="12.4" height="6" rx="2.2" fill="#e58ce8"/><circle cx="3.3" cy="6" r="0.9" fill="rgba(0,0,0,.35)"/></g></svg></div></div></td><td><div class="cell"><span class="pb"></span><span>/mnt/media</span></div></td><td>1 GB</td><td>2020-01-08T17:21:58</td><td></td><td></td><td>root</td><td>$ 2.50</td><td></td></tr>
<tr class="o"><td><div class="cell"><div class="cb"></div></div></td><td style="padding-left:2px"><div class="cell"><svg class="fic" width="4.6" height="6" viewBox="0 0 9 12"><path d="M0.3 0.3 H6 L8.7 3 V11.7 H0.3 Z" fill="#8d9aab"/><path d="M1.5 1.5 H5.4 V3.6 H7.5 V10.5 H1.5 Z" fill="#aab6c4"/><path d="M2.6 6 H6.4 M2.6 8 H6.4" stroke="#6f7c8d" stroke-width="0.8"/></svg><span>GeoNAS.1.0</span><span class="sb"><svg width="8.4" height="7.6" viewBox="0 0 84 76"><path d="M30 18 H50 L58 26 V58 H30 Z" fill="#a3a6aa" transform="rotate(-18 44 38)"/><path d="M36 34 H50 M36 42 H50" stroke="#34373e" stroke-width="4" transform="rotate(-18 44 38)"/></svg></span></div></td><td><div class="cell"><div style="margin-left:0.8px"><svg width="7" height="6" viewBox="0 0 14 12"><g transform="rotate(38 7 6)"><rect x="0.8" y="3" width="12.4" height="6" rx="2.2" fill="#e58ce8"/><circle cx="3.3" cy="6" r="0.9" fill="rgba(0,0,0,.35)"/></g></svg></div></div></td><td><div class="cell"><span class="pb"></span><span>/mnt/media</span></div></td><td>1 GB</td><td>2020-01-08T17:22:03</td><td></td><td></td><td>root</td><td>$ 2.50</td><td></td></tr>
<tr class="e"><td><div class="cell"><div class="cb"></div></div></td><td style="padding-left:2px"><div class="cell"><svg class="fic" width="4.6" height="6" viewBox="0 0 9 12"><path d="M0.3 0.3 H6 L8.7 3 V11.7 H0.3 Z" fill="#8d9aab"/><path d="M1.5 1.5 H5.4 V3.6 H7.5 V10.5 H1.5 Z" fill="#aab6c4"/><path d="M2.6 6 H6.4 M2.6 8 H6.4" stroke="#6f7c8d" stroke-width="0.8"/></svg><span>GeoNAS.2.0</span><span class="sb"><svg width="8.4" height="7.6" viewBox="0 0 84 76"><path d="M30 18 H50 L58 26 V58 H30 Z" fill="#a3a6aa" transform="rotate(-18 44 38)"/><path d="M36 34 H50 M36 42 H50" stroke="#34373e" stroke-width="4" transform="rotate(-18 44 38)"/></svg></span></div></td><td><div class="cell"><div style="margin-left:0.8px"><svg width="7" height="6" viewBox="0 0 14 12"><g transform="rotate(38 7 6)"><rect x="0.8" y="3" width="12.4" height="6" rx="2.2" fill="#e58ce8"/><circle cx="3.3" cy="6" r="0.9" fill="rgba(0,0,0,.35)"/></g></svg></div></div></td><td><div class="cell"><span class="pb"></span><span>/mnt/media</span></div></td><td>1 GB</td><td>2020-01-08T17:22:01</td><td></td><td></td><td>root</td><td>$ 2.50</td><td></td></tr>
<tr class="o"><td><div class="cell"><div class="cb"></div></div></td><td style="padding-left:2px"><div class="cell"><svg class="fic" width="4.6" height="6" viewBox="0 0 9 12"><path d="M0.3 0.3 H6 L8.7 3 V11.7 H0.3 Z" fill="#8d9aab"/><path d="M1.5 1.5 H5.4 V3.6 H7.5 V10.5 H1.5 Z" fill="#aab6c4"/><path d="M2.6 6 H6.4 M2.6 8 H6.4" stroke="#6f7c8d" stroke-width="0.8"/></svg><span>GeoNAS.3.0</span><span class="sb"><svg width="8.4" height="7.6" viewBox="0 0 84 76"><path d="M30 18 H50 L58 26 V58 H30 Z" fill="#a3a6aa" transform="rotate(-18 44 38)"/><path d="M36 34 H50 M36 42 H50" stroke="#34373e" stroke-width="4" transform="rotate(-18 44 38)"/></svg></span></div></td><td><div class="cell"><div style="margin-left:0.8px"><svg width="7" height="6" viewBox="0 0 14 12"><g transform="rotate(38 7 6)"><rect x="0.8" y="3" width="12.4" height="6" rx="2.2" fill="#e58ce8"/><circle cx="3.3" cy="6" r="0.9" fill="rgba(0,0,0,.35)"/></g></svg></div></div></td><td><div class="cell"><span class="pb"></span><span>/mnt/media</span></div></td><td>1 GB</td><td>2020-01-08T17:22:02</td><td></td><td></td><td>root</td><td>$ 2.50</td><td></td></tr>
<tr class="e"><td><div class="cell"><div class="cb"></div></div></td><td style="padding-left:2px"><div class="cell"><svg class="fic" width="4.6" height="6" viewBox="0 0 9 12"><path d="M0.3 0.3 H6 L8.7 3 V11.7 H0.3 Z" fill="#8d9aab"/><path d="M1.5 1.5 H5.4 V3.6 H7.5 V10.5 H1.5 Z" fill="#aab6c4"/><path d="M2.6 6 H6.4 M2.6 8 H6.4" stroke="#6f7c8d" stroke-width="0.8"/></svg><span>GeoNAS.4.0</span><span class="sb"><svg width="8.4" height="7.6" viewBox="0 0 84 76"><path d="M30 18 H50 L58 26 V58 H30 Z" fill="#a3a6aa" transform="rotate(-18 44 38)"/><path d="M36 34 H50 M36 42 H50" stroke="#34373e" stroke-width="4" transform="rotate(-18 44 38)"/></svg></span></div></td><td><div class="cell"><div style="margin-left:0.8px"><svg width="7" height="6" viewBox="0 0 14 12"><g transform="rotate(38 7 6)"><rect x="0.8" y="3" width="12.4" height="6" rx="2.2" fill="#e58ce8"/><circle cx="3.3" cy="6" r="0.9" fill="rgba(0,0,0,.35)"/></g></svg></div></div></td><td><div class="cell"><span class="pb"></span><span>/mnt/media</span></div></td><td>1 GB</td><td>2020-01-08T17:21:38</td><td></td><td></td><td>root</td><td>$ 2.50</td><td></td></tr>
<tr class="o"><td><div class="cell"><div class="cb"></div></div></td><td style="padding-left:2px"><div class="cell"><svg class="fic" width="6" height="4.5" viewBox="0 0 12 9"><path d="M0 1 Q0 0 1 0 H4.5 L5.5 1.3 H11 Q12 1.3 12 2.3 V8 Q12 9 11 9 H1 Q0 9 0 8 Z" fill="#f5bd2a"/></svg><span>UTILITIES</span><span class="sb"><svg width="8.4" height="7.6" viewBox="0 0 84 76"><circle cx="42" cy="38" r="17" stroke="#a3a6aa" stroke-width="9" fill="none"/><circle cx="42" cy="38" r="5" fill="#a3a6aa"/></svg></span><span class="sb"><svg width="8.4" height="7.6" viewBox="0 0 84 76"><path d="M30 18 H50 L58 26 V58 H30 Z" fill="#a3a6aa" transform="rotate(-18 44 38)"/><path d="M36 34 H50 M36 42 H50" stroke="#34373e" stroke-width="4" transform="rotate(-18 44 38)"/></svg></span></div></td><td><div class="cell"></div></td><td><div class="cell"><span class="pb"></span><span>/mnt/media</span></div></td><td>723.5 MB</td><td>2021-07-08T14:44:40</td><td>8</td><td>3</td><td>root</td><td>$ 1.77</td><td></td></tr>
<tr class="e"><td><div class="cell"><div class="cb"></div></div></td><td style="padding-left:2px"><div class="cell"><svg class="fic" width="6" height="4.5" viewBox="0 0 12 9"><path d="M0 1 Q0 0 1 0 H4.5 L5.5 1.3 H11 Q12 1.3 12 2.3 V8 Q12 9 11 9 H1 Q0 9 0 8 Z" fill="#f5bd2a"/></svg><span>Visio</span><span class="sb"><svg width="8.4" height="7.6" viewBox="0 0 84 76"><circle cx="42" cy="38" r="17" stroke="#a3a6aa" stroke-width="9" fill="none"/><circle cx="42" cy="38" r="5" fill="#a3a6aa"/></svg></span><span class="sb"><svg width="8.4" height="7.6" viewBox="0 0 84 76"><path d="M30 18 H50 L58 26 V58 H30 Z" fill="#a3a6aa" transform="rotate(-18 44 38)"/><path d="M36 34 H50 M36 42 H50" stroke="#34373e" stroke-width="4" transform="rotate(-18 44 38)"/></svg></span></div></td><td><div class="cell"></div></td><td><div class="cell"><span class="pb"></span><span>/mnt/media</span></div></td><td>197.1 MB</td><td>2020-08-10T18:24:26</td><td>13</td><td>1</td><td>root</td><td>$ 0.48</td><td></td></tr>
</table>
<div id="dd" class="abs">
<div class="di" style="top:4.30px;color:#cf7fe0"><svg width="7.6" height="6.4" viewBox="0 0 14 12"><g transform="rotate(38 7 6)"><rect x="0.8" y="3" width="12.4" height="6" rx="2.2" fill="#cf7fe0"/><circle cx="3.3" cy="6" r="0.9" fill="rgba(0,0,0,.35)"/></g></svg><span>autotag</span></div>
<div class="di" style="top:15.00px;color:#5fd35f"><svg width="7.6" height="6.4" viewBox="0 0 14 12"><g transform="rotate(38 7 6)"><rect x="0.8" y="3" width="12.4" height="6" rx="2.2" fill="#5fd35f"/><circle cx="3.3" cy="6" r="0.9" fill="rgba(0,0,0,.35)"/></g></svg><span>cleanlist</span></div>
<div class="di" style="top:25.00px;color:#45b8e6"><svg width="7.6" height="6.4" viewBox="0 0 14 12"><g transform="rotate(38 7 6)"><rect x="0.8" y="3" width="12.4" height="6" rx="2.2" fill="#45b8e6"/><circle cx="3.3" cy="6" r="0.9" fill="rgba(0,0,0,.35)"/></g></svg><span>keep</span></div>
<div class="di" style="top:35.20px;color:#a8abb0"><svg width="7.6" height="6.4" viewBox="0 0 14 12"><g transform="rotate(38 7 6)"><rect x="0.8" y="3" width="12.4" height="6" rx="2.2" fill="#a8abb0"/><circle cx="3.3" cy="6" r="0.9" fill="rgba(0,0,0,.35)"/></g></svg><span>archive</span></div>
<div class="di" style="top:44.80px;color:#f0b43c"><svg width="7.6" height="6.4" viewBox="0 0 14 12"><g transform="rotate(38 7 6)"><rect x="0.8" y="3" width="12.4" height="6" rx="2.2" fill="#f0b43c"/><circle cx="3.3" cy="6" r="0.9" fill="rgba(0,0,0,.35)"/></g></svg><span>delete</span></div>
<div class="di" style="top:55.90px;color:#ea5a50"><svg width="7.6" height="6.4" viewBox="0 0 14 12"><g transform="rotate(38 7 6)"><rect x="0.8" y="3" width="12.4" height="6" rx="2.2" fill="#ea5a50"/><circle cx="3.3" cy="6" r="0.9" fill="rgba(0,0,0,.35)"/></g></svg><span>approved_delete</span></div>
<div class="dv" style="top:67px"></div>
<div class="di" style="top:73px;color:#8f9297;left:6.6px;font-size:5.75px"><span style="font-size:7.4px;font-weight:bold;color:#a5a8ac;margin-right:0.6px">&times;</span><span>Remove all tags</span></div>
<div class="dv" style="top:86.5px"></div>
<div class="abs" style="left:1.8px;top:88.3px;width:48.6px;height:11.4px;background:#24272b;border:0.6px solid #1d1f22;border-radius:1px"></div>
<div class="abs" style="left:5px;top:91px;font-size:5px;line-height:6px;color:#9a9da2;-webkit-text-stroke-width:0.1px">Add new...</div>
<div class="abs" style="left:51.9px;top:89.3px;width:8.6px;height:10.2px;background:#44474d;border-radius:1.5px;box-shadow:0 0 0 0.5px #34373c"></div>
<div class="abs" style="left:53.6px;top:91.8px;width:5.2px;height:5.2px;background:linear-gradient(#111,#111) center/5.2px 2.4px no-repeat,linear-gradient(#111,#111) center/2.4px 5.2px no-repeat"></div><div class="abs" style="left:54.2px;top:92.4px;width:4px;height:4px;background:linear-gradient(#fff,#fff) center/4px 1.2px no-repeat,linear-gradient(#fff,#fff) center/1.2px 4px no-repeat"></div>
<div class="abs" style="left:1.8px;top:101.5px;font-size:4.8px;line-height:6px;color:#e0e0e0;white-space:nowrap;-webkit-text-stroke-width:0.1px">tag name|#hexcolor</div>
<div class="dv" style="top:112px"></div>
<div class="di" style="top:118px;color:#8f9297;left:6.6px;font-size:5.75px"><svg width="5.6" height="4.6" viewBox="0 0 12 9.5"><path d="M0 1 Q0 0 1 0 H4.5 L5.5 1.3 H11 Q12 1.3 12 2.3 V8.5 Q12 9.5 11 9.5 H1 Q0 9.5 0 8.5 Z" fill="#8f9297"/></svg><span>Apply tags to</span></div>
<div class="abs" style="left:58px;top:119.6px;border-top:2px solid transparent;border-bottom:2px solid transparent;border-left:2.4px solid #e6e6e6"></div>
<div class="dv" style="top:130px"></div>
<div class="di" style="top:135.5px;color:#8f9297;left:6.6px;font-size:5.75px"><svg width="7" height="6" viewBox="0 0 14 12"><g transform="rotate(38 7 6)"><rect x="0.8" y="3" width="12.4" height="6" rx="2.2" fill="#8f9297"/><circle cx="3.3" cy="6" r="0.9" fill="rgba(0,0,0,.35)"/></g></svg><span style="margin-left:-1.6px">Edit tags</span></div>
</div>
</div></body></html>
